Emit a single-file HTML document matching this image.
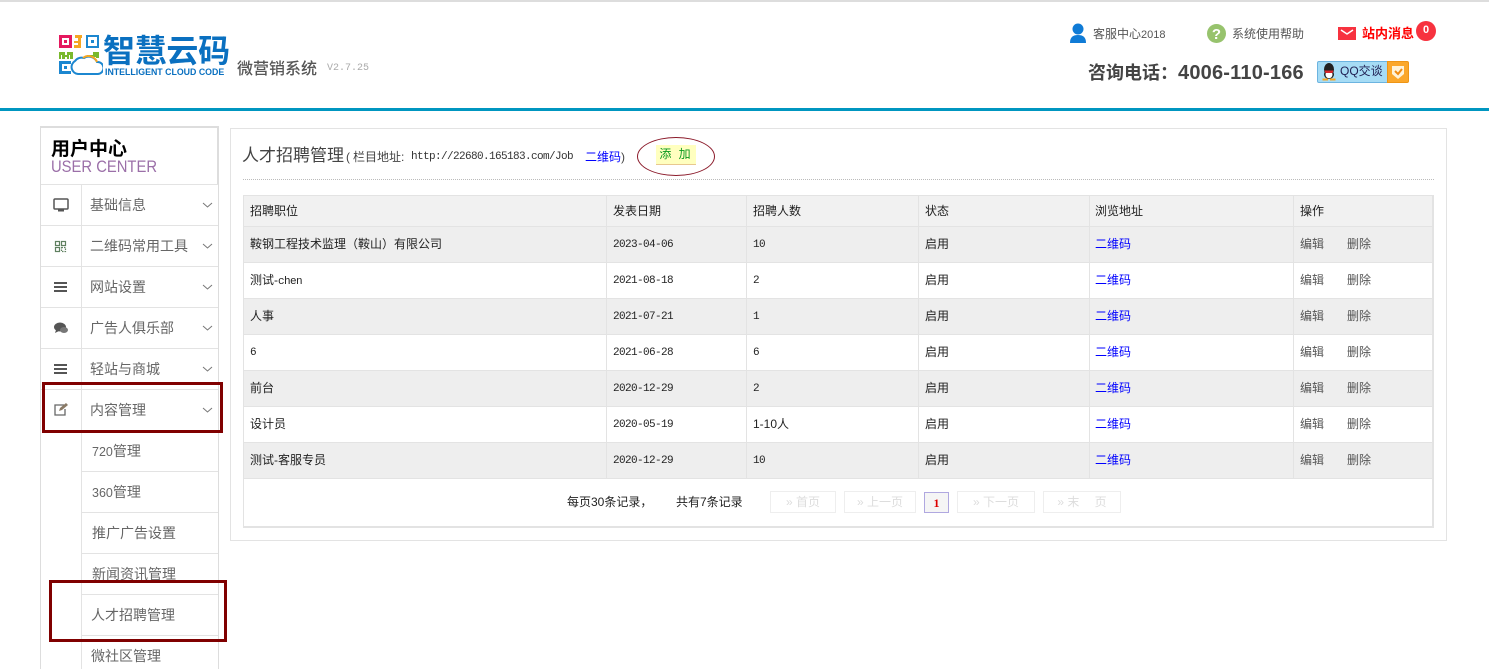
<!DOCTYPE html>
<html lang="zh"><head><meta charset="utf-8"><title>人才招聘管理</title>
<style>
html,body{margin:0;padding:0;background:#fff}
body{position:relative;width:1489px;height:669px;overflow:hidden;font-family:"Liberation Sans","WenQuanYi Zen Hei","Noto Sans CJK SC",sans-serif;font-size:12px;color:#333}
.a{position:absolute;white-space:nowrap}
.l{position:absolute;background:#e3e3e3}
.m{font-size:14px;color:#666;left:90px;line-height:20px}
.s{font-size:14px;color:#666;left:92px;line-height:20px}
.t{line-height:16px;color:#222}
.b{color:#00f;font-size:12px;left:1095px;line-height:16px}
.e{color:#555;left:1300px;line-height:16px}
.d{color:#555;left:1347px;line-height:16px}
.p{border:1px solid #eee;height:20px;line-height:20px;top:491px;color:#ddd;box-sizing:content-box;text-align:center}
.mono{font-family:"Liberation Mono","WenQuanYi Zen Hei",monospace;font-size:11px;letter-spacing:-.6px}
.t.mono{line-height:18px}
</style></head><body>
<div class="l" style="left:0;top:0;width:1489px;height:2px;background:#ddd"></div>
<div class="l" style="left:0;top:108px;width:1489px;height:3px;background:#0096c0"></div>

<svg class="a" style="left:59px;top:35px" width="44" height="42" viewBox="0 0 44 42">
<rect x="0" y="0" width="13" height="13" fill="#e5195f"/><rect x="3" y="3" width="7" height="7" fill="#fff"/><rect x="5" y="5" width="3" height="3" fill="#e5195f"/>
<rect x="16" y="0" width="7" height="3" fill="#f5a623"/><rect x="19" y="3" width="3" height="9" fill="#f5a623"/><rect x="15" y="6" width="4" height="2" fill="#f5a623"/><rect x="15" y="10" width="7" height="3" fill="#f5a623"/>
<rect x="27" y="0" width="13" height="13" fill="#1c87d0"/><rect x="29" y="2" width="9" height="9" fill="#fff"/><rect x="32" y="5" width="3" height="3" fill="#1c87d0"/>
<path d="M0 24V17H6V20H8V17H14V24H11V20H10V24H8V22H6V24H3V20H2V24Z" fill="#7ab92d"/><path d="M28 20h6v-3h6v6h-3v-1h-9z" fill="#7ab92d"/>
<rect x="0" y="26" width="12" height="13" fill="#1c87d0"/><rect x="3" y="29" width="9" height="7" fill="#fff"/><rect x="5" y="31" width="3" height="3" fill="#1c87d0"/>
<path d="M19 39a7 7 0 0 1-3-13 8 8 0 0 1 9-3 9 9 0 0 1 13 4 6 6 0 0 1 1 12z" fill="#fff" stroke="#1c87d0" stroke-width="2"/>
<path d="M24 23a9 9 0 0 1 14 4" fill="none" stroke="#f5a623" stroke-width="2"/>
</svg>
<div class="a" style="left:103px;top:30px;font-size:32px;line-height:38px;color:#0a70c0;font-weight:bold;letter-spacing:-.3px;font-family:'Noto Sans CJK SC',sans-serif">智慧云码</div>
<div class="a" style="left:105px;top:66px;font-size:8.800px;line-height:12px;color:#0a70c0;font-weight:bold">INTELLIGENT CLOUD CODE</div>
<div class="a" style="left:237px;top:57px;font-size:16px;line-height:20px;color:#555;font-weight:500;font-family:'Noto Sans CJK SC',sans-serif">微营销系统</div>
<div class="a" style="left:327px;top:62px;font-size:10px;line-height:14px;color:#aaa;font-family:'Liberation Mono',monospace">V2.7.25</div>

<svg class="a" style="left:1069px;top:23px" width="18" height="20" viewBox="0 0 18 20"><circle cx="9" cy="6" r="5.500" fill="#0f7bd6"/><path d="M1 20c0-6 3-8 8-8s8 2 8 8z" fill="#0f7bd6"/></svg>
<div class="a" style="left:1093px;top:26px;line-height:16px;color:#555">客服中心<span style="font-size:11px">2018</span></div>
<svg class="a" style="left:1207px;top:24px" width="19" height="19" viewBox="0 0 19 19"><circle cx="9.500" cy="9.500" r="9.500" fill="#97c36d"/><text x="9.500" y="15" text-anchor="middle" font-family="Liberation Sans" font-weight="bold" font-size="15" fill="#fff">?</text></svg>
<div class="a" style="left:1232px;top:26px;line-height:16px;color:#555">系统使用帮助</div>
<svg class="a" style="left:1338px;top:27px" width="18" height="13" viewBox="0 0 18 13"><rect width="18" height="13" fill="#f7323f"/><path d="M3 3l6 4 6-4" fill="none" stroke="#fff" stroke-width="1.500"/></svg>
<div class="a" style="left:1362px;top:26px;line-height:16px;color:#f00;font-weight:bold;font-size:13px">站内消息</div>
<div class="a" style="left:1416px;top:21px;width:20px;height:20px;border-radius:10px;background:#f7323f;color:#fff;font-weight:bold;text-align:center;line-height:19px;font-size:11px">0</div>
<div class="a" style="left:1088px;top:60px;font-size:18px;line-height:24px;font-weight:bold;color:#444;font-family:'Noto Sans CJK SC',sans-serif">咨询电话：</div>
<div class="a" style="left:1178px;top:61px;font-size:20px;line-height:24px;font-weight:bold;color:#444;letter-spacing:.2px">4006-110-166</div>
<div class="a" style="left:1317px;top:61px;width:71px;height:22px;background:#a6dcf5;border:1px solid #6cb4e0;border-radius:2px 0 0 2px;box-sizing:border-box"></div>
<svg class="a" style="left:1321px;top:63px" width="16" height="18" viewBox="0 0 16 18"><ellipse cx="8" cy="6.500" rx="5" ry="6.500" fill="#222"/><ellipse cx="8" cy="11.500" rx="5" ry="4.500" fill="#222"/><ellipse cx="8" cy="11.500" rx="3.500" ry="3.800" fill="#fff"/><path d="M3.500 7.500h9l-1 2.500h-7z" fill="#d8262c"/><path d="M1.500 15.500h5.500v2H1.500zM9 15.500h5.500v2H9z" fill="#f5a623"/></svg>
<div class="a" style="left:1340px;top:63px;line-height:16px;color:#225;font-size:12px">QQ交谈</div>
<div class="a" style="left:1387px;top:61px;width:22px;height:22px;background:#fba72a;border:1px solid #ee9515;border-radius:0 2px 2px 0;box-sizing:border-box"></div>
<svg class="a" style="left:1391px;top:65px" width="14" height="15" viewBox="0 0 14 15"><path d="M1 1h12v8l-6 5-6-5z" fill="#fff3d8"/><path d="M4 6l3 3 4-5" fill="none" stroke="#f08a10" stroke-width="2"/></svg>

<!-- sidebar -->
<div class="l" style="left:40px;top:126px;width:179px;height:2px;background:#ddd"></div>
<div class="l" style="left:40px;top:126px;width:1px;height:543px;background:#ddd"></div>
<div class="l" style="left:218px;top:126px;width:1px;height:543px;background:#ddd"></div>
<div class="l" style="left:217px;top:126px;width:1px;height:58px;background:#ddd"></div>
<div class="l" style="left:81px;top:184px;width:1px;height:485px"></div>
<div class="l" style="left:41px;top:184px;width:177px;height:1px"></div>
<div class="l" style="left:41px;top:225px;width:177px;height:1px"></div>
<div class="l" style="left:41px;top:266px;width:177px;height:1px"></div>
<div class="l" style="left:41px;top:307px;width:177px;height:1px"></div>
<div class="l" style="left:41px;top:348px;width:177px;height:1px"></div>
<div class="l" style="left:41px;top:389px;width:177px;height:1px"></div>
<div class="l" style="left:81px;top:430px;width:137px;height:1px"></div>
<div class="l" style="left:81px;top:471px;width:137px;height:1px"></div>
<div class="l" style="left:81px;top:512px;width:137px;height:1px"></div>
<div class="l" style="left:81px;top:553px;width:137px;height:1px"></div>
<div class="l" style="left:81px;top:594px;width:137px;height:1px"></div>
<div class="l" style="left:81px;top:635px;width:137px;height:1px"></div>
<div class="a" style="left:51px;top:136px;font-size:19px;line-height:24px;font-weight:bold;color:#000;font-family:'Noto Sans CJK SC',sans-serif">用户中心</div>
<div class="a" style="left:51px;top:157px;font-size:17px;line-height:20px;color:#9b6fa8;transform:scaleX(.87);transform-origin:left top">USER CENTER</div>

<div class="a m" style="top:195px">基础信息</div>
<div class="a m" style="top:236px">二维码常用工具</div>
<div class="a m" style="top:277px">网站设置</div>
<div class="a m" style="top:318px">广告人俱乐部</div>
<div class="a m" style="top:359px">轻站与商城</div>
<div class="a m" style="top:400px">内容管理</div>
<div class="a s" style="top:441px"><span style="font-size:12.500px">720</span>管理</div>
<div class="a s" style="top:482px"><span style="font-size:12.500px">360</span>管理</div>
<div class="a s" style="top:523px">推广广告设置</div>
<div class="a s" style="top:564px">新闻资讯管理</div>
<div class="a s" style="left:91px;top:605px">人才招聘管理</div>
<div class="a s" style="left:91px;top:646px">微社区管理</div>

<svg class="a" style="left:0;top:0" width="230" height="430">
<g fill="none" stroke="#777" stroke-width="1">
<path d="M203 203l4.500 4 4.500-4M203 244l4.500 4 4.500-4M203 285l4.500 4 4.500-4M203 326l4.500 4 4.500-4M203 367l4.500 4 4.500-4M203 408l4.500 4 4.500-4"/>
</g>
<rect x="54" y="199" width="14" height="10" rx="1" fill="#fff" stroke="#555" stroke-width="1.500"/><path d="M58 210.500h6" stroke="#555" stroke-width="2"/>
<g fill="none" stroke="#5f8060" stroke-width="1.200"><rect x="55.500" y="241.500" width="4" height="4"/><rect x="61.500" y="241.500" width="4" height="4"/><rect x="55.500" y="247.500" width="4" height="4"/><path d="M61.500 247.500h4v4h-4z" stroke-dasharray="1.500 1"/></g>
<path d="M54 283h13M54 287h13M54 291h13M54 365h13M54 369h13M54 373h13" stroke="#555" stroke-width="2"/>
<ellipse cx="60" cy="327" rx="6" ry="4.500" fill="#555"/><ellipse cx="64" cy="330" rx="4" ry="3" fill="#777"/><path d="M56 330l-1 3 4-2z" fill="#555"/>
<path d="M64 405h-9v10h10v-6" fill="none" stroke="#666" stroke-width="1.300"/><path d="M59 411l1-3 6-5 2 2-6 5z" fill="#8a7a66"/>
</svg>

<div class="a" style="left:42px;top:382px;width:181px;height:51px;border:3px solid #800000;box-sizing:border-box"></div>
<div class="a" style="left:49px;top:580px;width:178px;height:62px;border:3px solid #800000;box-sizing:border-box"></div>

<!-- panel -->
<div class="a" style="left:230px;top:128px;width:1217px;height:413px;border:1px solid #e3e3e3;box-sizing:border-box"></div>
<div class="a" style="left:242px;top:145px;font-size:17px;line-height:22px;color:#444">人才招聘管理</div>
<div class="a" style="left:346px;top:149px;line-height:16px;color:#444">(</div>
<div class="a" style="left:353px;top:149px;line-height:16px;color:#444">栏目地址:</div>
<div class="a mono" style="left:411px;top:149px;line-height:16px;color:#333">http://22680.165183.com/Job</div>
<div class="a" style="left:585px;top:149px;line-height:16px;color:#00f">二维码</div>
<div class="a" style="left:621px;top:149px;line-height:16px;color:#444">)</div>
<div class="a" style="left:637px;top:137px;width:78px;height:39px;border:1px solid #8b1a2a;border-radius:50%;box-sizing:border-box"></div>
<div class="a" style="left:656px;top:145px;width:40px;height:20px;background:#ffffbf;border-bottom:1px solid #e8c890;box-sizing:border-box;color:#0a9a20;text-align:center;line-height:19px;letter-spacing:2px">添 加</div>
<div class="a" style="left:243px;top:179px;width:1191px;height:0;border-top:1px dotted #bbb"></div>

<!-- table -->
<div class="a" style="left:243px;top:195px;width:1191px;height:333px;border:1px solid #e3e3e3;border-bottom:2px solid #e3e3e3;border-right:2px solid #e3e3e3;box-sizing:border-box"></div>
<div class="l" style="left:244px;top:196px;width:1188px;height:30px;background:#f1f1f1"></div>
<div class="l" style="left:244px;top:227px;width:1188px;height:35px;background:#eee"></div>
<div class="l" style="left:244px;top:299px;width:1188px;height:35px;background:#eee"></div>
<div class="l" style="left:244px;top:371px;width:1188px;height:35px;background:#eee"></div>
<div class="l" style="left:244px;top:443px;width:1188px;height:35px;background:#eee"></div>
<div class="l" style="left:244px;top:226px;width:1188px;height:1px"></div>
<div class="l" style="left:244px;top:262px;width:1188px;height:1px"></div>
<div class="l" style="left:244px;top:298px;width:1188px;height:1px"></div>
<div class="l" style="left:244px;top:334px;width:1188px;height:1px"></div>
<div class="l" style="left:244px;top:370px;width:1188px;height:1px"></div>
<div class="l" style="left:244px;top:406px;width:1188px;height:1px"></div>
<div class="l" style="left:244px;top:442px;width:1188px;height:1px"></div>
<div class="l" style="left:244px;top:478px;width:1188px;height:1px"></div>
<div class="l" style="left:606px;top:196px;width:1px;height:282px"></div>
<div class="l" style="left:746px;top:196px;width:1px;height:282px"></div>
<div class="l" style="left:918px;top:196px;width:1px;height:282px"></div>
<div class="l" style="left:1089px;top:196px;width:1px;height:282px"></div>
<div class="l" style="left:1293px;top:196px;width:1px;height:282px"></div>

<div class="a t" style="left:250px;top:203px">招聘职位</div><div class="a t" style="left:613px;top:203px">发表日期</div><div class="a t" style="left:753px;top:203px">招聘人数</div><div class="a t" style="left:925px;top:203px">状态</div><div class="a t" style="left:1095px;top:203px">浏览地址</div><div class="a t" style="left:1300px;top:203px">操作</div>

<div class="a t" style="left:250px;top:236px">鞍钢工程技术监理（鞍山）有限公司</div><div class="a t mono" style="left:613px;top:236px">2023-04-06</div><div class="a t mono" style="left:753px;top:236px">10</div><div class="a t" style="left:925px;top:236px">启用</div><div class="a b" style="top:236px">二维码</div><div class="a e" style="top:236px">编辑</div><div class="a d" style="top:236px">删除</div>
<div class="a t" style="left:250px;top:272px">测试-<span class="mono">chen</span></div><div class="a t mono" style="left:613px;top:272px">2021-08-18</div><div class="a t mono" style="left:753px;top:272px">2</div><div class="a t" style="left:925px;top:272px">启用</div><div class="a b" style="top:272px">二维码</div><div class="a e" style="top:272px">编辑</div><div class="a d" style="top:272px">删除</div>
<div class="a t" style="left:250px;top:308px">人事</div><div class="a t mono" style="left:613px;top:308px">2021-07-21</div><div class="a t mono" style="left:753px;top:308px">1</div><div class="a t" style="left:925px;top:308px">启用</div><div class="a b" style="top:308px">二维码</div><div class="a e" style="top:308px">编辑</div><div class="a d" style="top:308px">删除</div>
<div class="a t mono" style="left:250px;top:344px">6</div><div class="a t mono" style="left:613px;top:344px">2021-06-28</div><div class="a t mono" style="left:753px;top:344px">6</div><div class="a t" style="left:925px;top:344px">启用</div><div class="a b" style="top:344px">二维码</div><div class="a e" style="top:344px">编辑</div><div class="a d" style="top:344px">删除</div>
<div class="a t" style="left:250px;top:380px">前台</div><div class="a t mono" style="left:613px;top:380px">2020-12-29</div><div class="a t mono" style="left:753px;top:380px">2</div><div class="a t" style="left:925px;top:380px">启用</div><div class="a b" style="top:380px">二维码</div><div class="a e" style="top:380px">编辑</div><div class="a d" style="top:380px">删除</div>
<div class="a t" style="left:250px;top:416px">设计员</div><div class="a t mono" style="left:613px;top:416px">2020-05-19</div><div class="a t" style="left:753px;top:416px">1-10人</div><div class="a t" style="left:925px;top:416px">启用</div><div class="a b" style="top:416px">二维码</div><div class="a e" style="top:416px">编辑</div><div class="a d" style="top:416px">删除</div>
<div class="a t" style="left:250px;top:452px">测试-客服专员</div><div class="a t mono" style="left:613px;top:452px">2020-12-29</div><div class="a t mono" style="left:753px;top:452px">10</div><div class="a t" style="left:925px;top:452px">启用</div><div class="a b" style="top:452px">二维码</div><div class="a e" style="top:452px">编辑</div><div class="a d" style="top:452px">删除</div>

<!-- pager -->
<div class="a t" style="left:567px;top:494px">每页30条记录，</div>
<div class="a t" style="left:676px;top:494px">共有7条记录</div>
<div class="a p" style="left:770px;width:64px">» 首页</div>
<div class="a p" style="left:844px;width:70px">» 上一页</div>
<div class="a" style="left:924px;top:492px;width:25px;height:21px;border:1px solid #b0a8e0;background:#f5f5f5;box-sizing:border-box;text-align:center;line-height:20px;color:#d00;font-weight:bold;font-family:'Liberation Serif',serif">1</div>
<div class="a p" style="left:957px;width:76px">» 下一页</div>
<div class="a p" style="left:1043px;width:76px">» 末　 页</div>
</body></html>
